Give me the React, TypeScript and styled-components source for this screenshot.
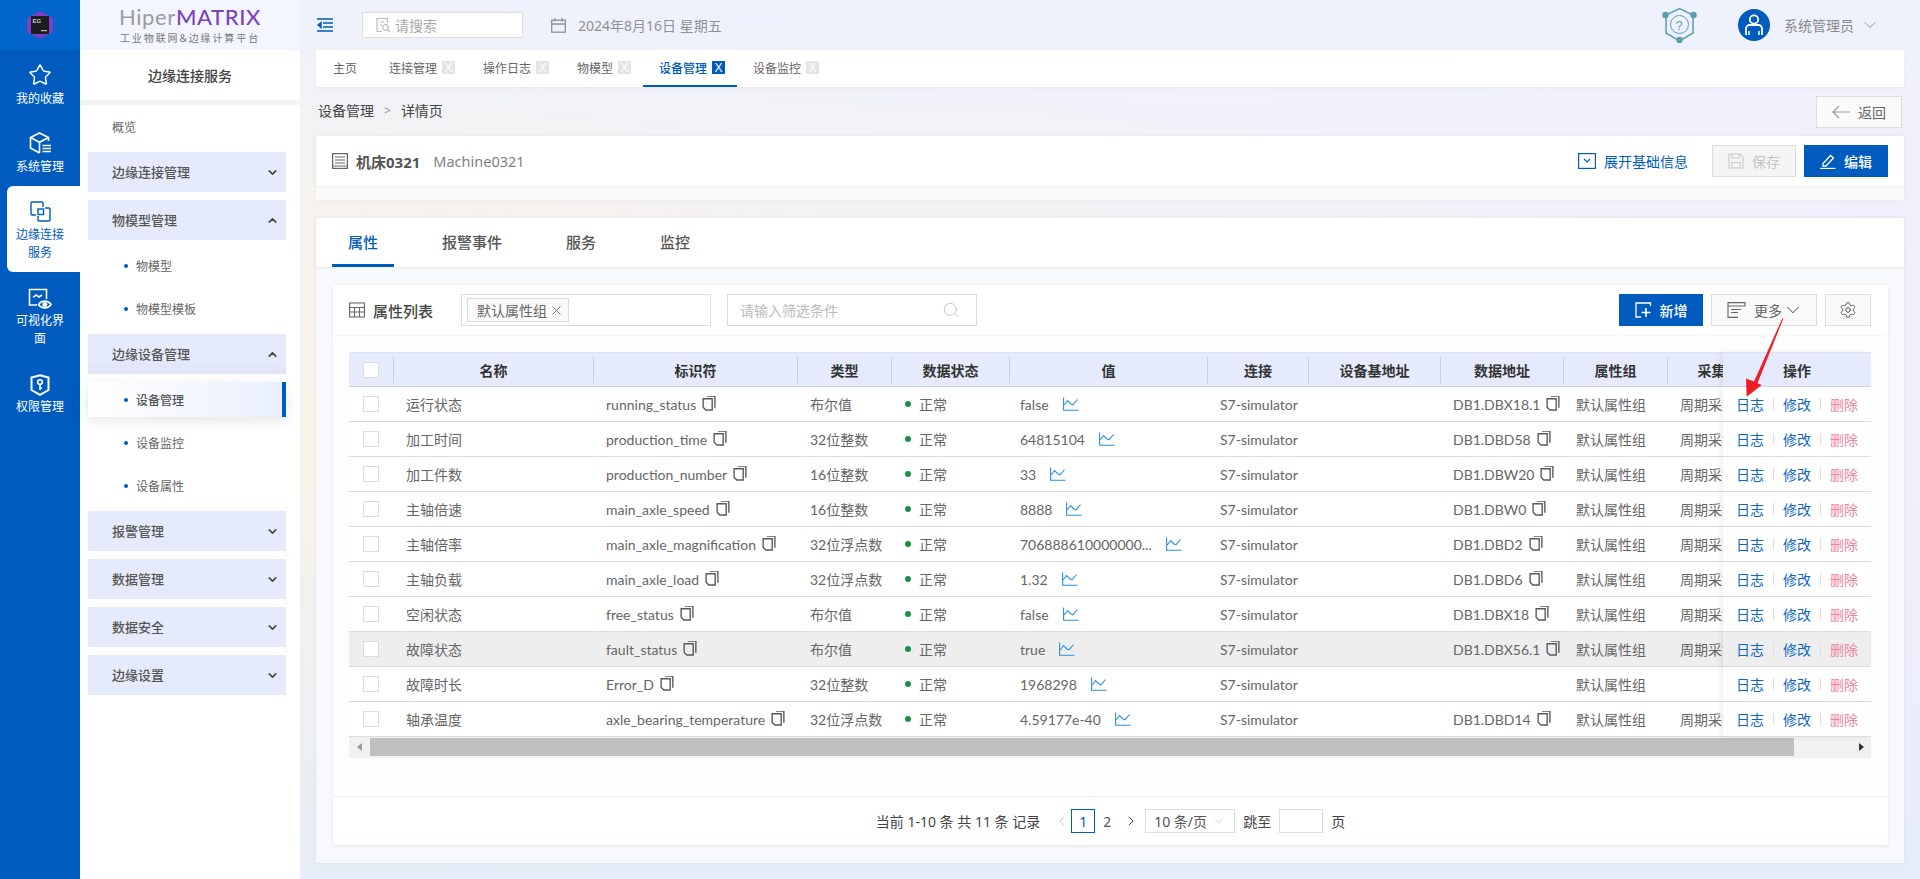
import React from 'react'
import styled, {createGlobalStyle} from 'styled-components'
import {ChevronDown, ChevronUp, ChevronLeft, ChevronRight, Search, Settings, Star} from 'lucide-react'

const blue = '#005bbf'
const font = '"Noto Sans", "Noto Sans CJK SC", sans-serif'
const tableFont = '"Lato", "Noto Sans CJK SC", sans-serif'

const GlobalStyle = createGlobalStyle`
  * { box-sizing: border-box; }
  html, body { margin: 0; padding: 0; height: 100%; overflow: hidden; }
  body { font-family: ${font}; font-size: 14px; color: #666; }
`

const Page = styled.div`
  display: flex;
  width: 1920px;
  height: 879px;
  overflow: hidden;
`

/* left rail */
const Rail = styled.nav`
  width: 80px;
  flex: none;
  background: ${blue};
  display: flex;
  flex-direction: column;
  align-items: flex-end;
`
const RailLogo = styled.div`
  width: 80px;
  height: 50px;
  background: #0065cb;
  display: flex;
  align-items: center;
  justify-content: center;
`
const RailItem = styled.div<{$active?: boolean; $h: number; $top: number; $gap: number}>`
  width: ${_ => (_.$active ? 73 : 80)}px;
  height: ${_ => _.$h}px;
  padding: ${_ => _.$top}px ${_ => (_.$active ? '16px 0 9px' : '16px 0')};
  display: flex;
  flex-direction: column;
  align-items: center;
  text-align: center;
  font-size: 12px;
  line-height: 18px;
  color: ${_ => (_.$active ? blue : '#fff')};
  background: ${_ => (_.$active ? '#fff' : 'transparent')};
  border-radius: ${_ => (_.$active ? '6px 0 0 6px' : '0')};
  svg { flex: none; margin-bottom: ${_ => _.$gap}px; }
`

/* sidebar */
const Side = styled.aside`
  width: 220px;
  flex: none;
  background: #fff;
  display: flex;
  flex-direction: column;
`
const Brand = styled.div`
  height: 50px;
  background: #f3f6fe;
  display: flex;
  flex-direction: column;
  align-items: center;
  padding-top: 3px;
`
const BrandName = styled.div`
  font-family: "Lato", sans-serif;
  font-size: 22px;
  line-height: 27px;
  letter-spacing: .6px;
  color: #9a9c9e;
  b { font-weight: 500; color: #7b44bd; }
`
const BrandSub = styled.div`
  font-size: 10px;
  line-height: 14px;
  letter-spacing: 1.9px;
  margin-top: 1px;
  color: #77797c;
`
const SideTitle = styled.div`
  height: 55px;
  border-bottom: 5px solid #f3f4f8;
  display: flex;
  align-items: center;
  justify-content: center;
  color: #444;
  font-weight: 500;
`
const SideList = styled.div`
  padding: 4px 14px 0 8px;
  display: flex;
  flex-direction: column;
  gap: 8px;
`
const Overview = styled.div`
  height: 35px;
  padding-left: 24px;
  display: flex;
  align-items: center;
  font-size: 12px;
  color: #666;
`
const GroupLabel = styled.span`
  margin-top: -2px;
`
const Group = styled.div<{$deep?: boolean}>`
  height: 40px;
  padding: 0 7px 0 24px;
  background: ${_ => (_.$deep ? 'linear-gradient(180deg, #e5ebfc 60%, #dfe5f6)' : '#e5ebfc')};
  display: flex;
  align-items: center;
  justify-content: space-between;
  font-size: 13px;
  font-weight: 500;
  color: #555;
`
const Sub = styled.div<{$active?: boolean}>`
  height: 35px;
  padding-left: 36px;
  display: flex;
  align-items: center;
  gap: 8px;
  font-size: 12px;
  color: #666;
  ${_ => _.$active && `
    font-weight: 500;
    color: #555;
    background: linear-gradient(90deg, #fff, #e9effd);
    border-right: 4px solid ${blue};
    box-shadow: 0 4px 14px rgba(0, 0, 0, .1);
  `}
  &::before {
    content: '';
    width: 4px;
    height: 4px;
    border-radius: 50%;
    background: ${blue};
  }
`

/* main column */
const Main = styled.main`
  flex: 1;
  min-width: 0;
  height: 879px;
  padding: 0 16px;
  display: flex;
  flex-direction: column;
  background:
    linear-gradient(180deg, #eef2fd 0, rgba(238, 242, 253, .2) 210px, rgba(238, 242, 253, 0) 480px, #e6edf8 879px),
    linear-gradient(90deg, #f8f3ea, #f2eefc);
`
const Top = styled.header`
  height: 50px;
  flex: none;
  display: flex;
  align-items: center;
  color: #999;
`
const SearchBox = styled.div`
  width: 161px;
  height: 26px;
  margin-left: 29px;
  padding-left: 12px;
  background: #fff;
  border: 1px solid #ddd;
  display: flex;
  align-items: center;
  gap: 4px;
  color: #aaa;
`
const DateText = styled.span`
  margin-left: 12px;
  color: #8f9194;
`
const UserName = styled.span`
  margin: 0 6px 0 14px;
  color: #8a8a8a;
`
const TabBar = styled.div`
  height: 37px;
  flex: none;
  padding-left: 1px;
  background: #fff;
  box-shadow: 0 1px 3px rgba(0, 0, 0, .05);
  display: flex;
  align-items: stretch;
  font-size: 12px;
`
const NavTab = styled.div<{$active?: boolean; $close?: boolean}>`
  padding: 0 ${_ => (_.$close ? 12 : 16)}px 0 16px;
  display: flex;
  align-items: center;
  gap: 5px;
  color: ${_ => (_.$active ? blue : '#666')};
  font-weight: ${_ => (_.$active ? 500 : 400)};
  border-bottom: 2px solid ${_ => (_.$active ? blue : 'transparent')};
`
const CloseX = styled.i<{$active?: boolean}>`
  width: 13px;
  height: 13px;
  display: flex;
  align-items: center;
  justify-content: center;
  font-style: normal;
  font-size: 12px;
  font-family: "Liberation Sans", sans-serif;
  color: #fff;
  background: ${_ => (_.$active ? blue : '#e4e4e4')};
`
const CrumbRow = styled.div`
  height: 49px;
  flex: none;
  padding-right: 2px;
  display: flex;
  align-items: center;
  justify-content: space-between;
  color: #444;
`
const Crumbs = styled.div`
  display: flex;
  align-items: center;
  margin: -3px 0 0 2px;
  gap: 10px;
  span { color: #999; font-size: 12px; }
`
const Btn = styled.button<{$kind?: 'primary' | 'disabled'; $w: number}>`
  width: ${_ => _.$w}px;
  height: 32px;
  padding: 0;
  display: flex;
  align-items: center;
  justify-content: center;
  gap: 8px;
  font: 14px ${font};
  border: 1px solid ${_ => (_.$kind === 'primary' ? blue : '#ddd')};
  background: ${_ => (_.$kind === 'primary' ? blue : _.$kind === 'disabled' ? '#f5f5f5' : '#fafafa')};
  color: ${_ => (_.$kind === 'primary' ? '#fff' : _.$kind === 'disabled' ? '#c4c4c4' : '#666')};
  font-weight: ${_ => (_.$kind === 'primary' ? 500 : 400)};
`
const EditBtn = styled(Btn)`
  margin-left: 8px;
`
const InfoCard = styled.section`
  height: 64px;
  flex: none;
  background: #fafafa;
  box-shadow: 0 0 4px rgba(0, 0, 0, .04);
`
const InfoHead = styled.div`
  height: 50px;
  padding: 0 16px;
  background: #fff;
  box-shadow: 0 1px 3px rgba(0, 0, 0, .05);
  display: flex;
  align-items: center;
  color: #444;
`
const InfoName = styled.b`
  margin-left: 8px;
  font-size: 15px;
  font-weight: 700;
  color: #555;
`
const InfoCode = styled.span`
  margin-left: 13px;
  font-size: 14.5px;
  color: #808080;
`
const Expand = styled.div`
  margin-left: auto;
  margin-right: 24px;
  display: flex;
  align-items: center;
  gap: 8px;
  color: ${blue};
`
const ProtoCard = styled.section`
  height: 645px;
  margin-top: 18px;
  flex: none;
  background: #f8f9fc;
  box-shadow: 0 0 4px rgba(0, 0, 0, .05);
`
const PropTabs = styled.div`
  height: 49px;
  padding-left: 16px;
  background: #fff;
  box-shadow: 0 1px 3px rgba(0, 0, 0, .06);
  display: flex;
  gap: 32px;
`
const PropTab = styled.div<{$active?: boolean}>`
  padding: 0 16px;
  display: flex;
  align-items: center;
  font-size: 15px;
  font-weight: 500;
  color: ${_ => (_.$active ? blue : '#555')};
  border-bottom: 3px solid ${_ => (_.$active ? blue : 'transparent')};
`
const ListCard = styled.div`
  height: 561px;
  margin: 18px 16px 0 17px;
  background: #fdfdfd;
  box-shadow: 0 0 3px rgba(0, 0, 0, .08);
  display: flex;
  flex-direction: column;
`
const ListBar = styled.div`
  height: 50px;
  flex: none;
  padding: 0 17px 0 16px;
  background: #fff;
  box-shadow: 0 1px 3px rgba(0, 0, 0, .04);
  display: flex;
  align-items: center;
`
const ListTitle = styled.span`
  margin-left: 8px;
  font-size: 15px;
  font-weight: 500;
  color: #444;
`
const GroupSelect = styled.div`
  width: 250px;
  height: 32px;
  margin-left: 28px;
  padding-left: 5px;
  border: 1px solid #ddd;
  background: #fff;
  display: flex;
  align-items: center;
`
const Tag = styled.span`
  width: 102px;
  height: 24px;
  padding-left: 9px;
  border: 1px solid #ddd;
  background: #fafafa;
  display: flex;
  align-items: center;
  gap: 5px;
  color: #666;
`
const FilterBox = styled.div`
  width: 250px;
  height: 32px;
  margin-left: 16px;
  padding: 0 16px 0 12px;
  border: 1px solid #ddd;
  background: #fff;
  display: flex;
  align-items: center;
  justify-content: space-between;
  color: #bbb;
`
const BarButtons = styled.div`
  margin-left: auto;
  display: flex;
  gap: 8px;
`
const TableArea = styled.div`
  margin: 17px 17px 0 16px;
  position: relative;
  font-family: ${tableFont};
`
const TableBody = styled.div`
  display: flex;
  background: #fff;
`
const ScrollPane = styled.div`
  flex: 1;
  min-width: 0;
  overflow: hidden;
`
const FixedPane = styled.div`
  width: 148px;
  flex: none;
  box-shadow: -3px 0 5px rgba(0, 0, 0, .06);
  position: relative;
`
const cols = '44px 200px 204px 94px 118px 198px 101px 132px 123px 104px 116px'
const HeadRow = styled.div<{$cols?: boolean}>`
  height: 35px;
  width: ${_ => (_.$cols ? '1434px' : 'auto')};
  background: #e5ebfc;
  border-top: 1px solid #dde2ee;
  border-bottom: 1px solid #cfd3dc;
  display: ${_ => (_.$cols ? 'grid' : 'flex')};
  grid-template-columns: ${cols};
  align-items: center;
  justify-content: ${_ => (_.$cols ? 'start' : 'center')};
  font-weight: 700;
  color: #333;
`
const HeadCell = styled.div`
  height: 26px;
  display: flex;
  align-items: center;
  justify-content: center;
  border-left: 1px solid #c9cdd5;
  white-space: nowrap;
`
const Row = styled.div<{$hl?: boolean; $cols?: boolean}>`
  height: 35px;
  width: ${_ => (_.$cols ? '1434px' : 'auto')};
  background: ${_ => (_.$hl ? '#eeeeee' : '#fff')};
  border-bottom: 1px solid #dcdcdc;
  display: ${_ => (_.$cols ? 'grid' : 'flex')};
  grid-template-columns: ${cols};
  align-items: center;
  justify-content: ${_ => (_.$cols ? 'start' : 'flex-start')};
  padding-left: ${_ => (_.$cols ? 0 : 13)}px;
  color: #666;
`
const Cell = styled.div<{$pad?: number}>`
  padding-left: ${_ => _.$pad ?? 13}px;
  display: flex;
  align-items: center;
  white-space: nowrap;
  overflow: hidden;
  svg { flex: none; }
`
const CheckCell = styled.div`
  display: flex;
  padding-left: 14px;
`
const Check = styled.span`
  width: 16px;
  height: 16px;
  background: #fff;
  border: 1px solid #ddd;
`
const Dot = styled.i`
  width: 6px;
  height: 6px;
  margin-right: 8px;
  border-radius: 50%;
  background: #1d8f4a;
`
const Op = styled.a<{$danger?: boolean}>`
  color: ${_ => (_.$danger ? '#f0849a' : '#0f66c6')};
`
const OpSep = styled.i`
  width: 1px;
  height: 12px;
  margin: 0 9px;
  background: #ddd;
`
const ScrollTrack = styled.div`
  height: 21px;
  padding-top: 1px;
  background: #f1f1f1;
  display: flex;
  align-items: flex-start;
  justify-content: space-between;
  color: #555;
`
const ScrollArrow = styled.div<{$right?: boolean}>`
  width: 21px;
  height: 18px;
  display: flex;
  align-items: center;
  justify-content: center;
  &::before {
    content: '';
    border: 4px solid transparent;
    ${_ => (_.$right ? 'border-left: 5px solid #333; margin-left: 5px;' : 'border-right: 5px solid #999; margin-right: 5px;')}
  }
`
const ScrollThumb = styled.div`
  width: 1424px;
  height: 18px;
  margin-right: auto;
  background: #c0c0c0;
`
const Pager = styled.div`
  margin-top: auto;
  height: 50px;
  flex: none;
  background: #fff;
  border-top: 1px solid #f0f1f4;
  border-bottom: 1px solid #eceef2;
  display: flex;
  align-items: center;
  justify-content: center;
  color: #444;
`
const PageNum = styled.span<{$active?: boolean}>`
  width: 24px;
  height: 24px;
  display: flex;
  align-items: center;
  justify-content: center;
  border: 1px solid ${_ => (_.$active ? blue : 'transparent')};
  color: ${_ => (_.$active ? blue : '#555')};
`
const PageSize = styled.div`
  width: 90px;
  height: 24px;
  margin-right: 8px;
  padding: 0 8px;
  border: 1px solid #ddd;
  display: flex;
  align-items: center;
  justify-content: space-between;
  color: #555;
`
const PageInput = styled.div`
  width: 44px;
  height: 24px;
  margin: 0 8px;
  border: 1px solid #ddd;
`
const ArrowMark = styled.svg`
  position: absolute;
  left: 1391px;
  top: -37px;
`
const CopySvg = styled.svg`
  margin: -3px 0 0 6px;
`
const TrendSvg = styled.svg`
  margin-left: 14px;
`

const CopyIcon = () => (
  <CopySvg width="14" height="16" viewBox="0 0 13 15" fill="none" stroke="#5a5a5a" strokeWidth="1.300">
    <path d="M4.500 1h7.500v11" />
    <path d="M1 3.500h8.500V14H3.500L1 11.500z" />
  </CopySvg>
)
const TrendIcon = () => (
  <TrendSvg width="16" height="14" viewBox="0 0 16 14" fill="none" stroke="#2b8fd6" strokeWidth="1.100">
    <path d="M.6 .5v12.800H15.500" />
    <path d="M1.200 8L4.500 3.500 8 7l2 .8L14.500 2.500" />
  </TrendSvg>
)
const Chevron = ({up}: {up?: boolean}) =>
  up ? <ChevronUp size={13} strokeWidth={3} color="#444" /> : <ChevronDown size={13} strokeWidth={3} color="#444" />

const tabs = [
  {t: '主页'},
  {t: '连接管理', x: 1},
  {t: '操作日志', x: 1},
  {t: '物模型', x: 1},
  {t: '设备管理', x: 1, active: 1},
  {t: '设备监控', x: 1},
]
const groups = ['报警管理', '数据管理', '数据安全', '边缘设置']
const head = ['名称', '标识符', '类型', '数据状态', '值', '连接', '设备基地址', '数据地址', '属性组', '采集方式']
const rows = [
  ['运行状态', 'running_status', '布尔值', 'false', 'DB1.DBX18.1', 1],
  ['加工时间', 'production_time', '32位整数', '64815104', 'DB1.DBD58', 1],
  ['加工件数', 'production_number', '16位整数', '33', 'DB1.DBW20', 1],
  ['主轴倍速', 'main_axle_speed', '16位整数', '8888', 'DB1.DBW0', 1],
  ['主轴倍率', 'main_axle_magnification', '32位浮点数', '706888610000000...', 'DB1.DBD2', 1],
  ['主轴负载', 'main_axle_load', '32位浮点数', '1.32', 'DB1.DBD6', 1],
  ['空闲状态', 'free_status', '布尔值', 'false', 'DB1.DBX18', 1],
  ['故障状态', 'fault_status', '布尔值', 'true', 'DB1.DBX56.1', 1],
  ['故障时长', 'Error_D', '32位整数', '1968298', '', 0],
  ['轴承温度', 'axle_bearing_temperature', '32位浮点数', '4.59177e-40', 'DB1.DBD14', 1],
] as const

export default function App() {
  return (
    <Page>
      <GlobalStyle />
      <Rail>
        <RailLogo>
          <svg width="26" height="28" viewBox="0 0 26 28">
            <path d="M13 0l13 7v14l-13 7L0 21V7z" fill="#7d3fc4" />
            <rect x="4" y="5" width="18" height="18" fill="#1c1c22" />
            <text x="5.500" y="12" fontSize="6" fontWeight="700" fill="#ccc" fontFamily="Liberation Sans">EG</text>
            <rect x="14" y="19" width="6" height="1.200" fill="#bbb" />
          </svg>
        </RailLogo>
        <RailItem $h={68} $top={13} $gap={3}>
          <Star size={24} strokeWidth={1.500} />
          我的收藏
        </RailItem>
        <RailItem $h={68} $top={13} $gap={3}>
          <svg width="24" height="24" viewBox="0 0 24 24" fill="none" stroke="#fff" strokeWidth="1.600">
            <path d="M20.500 10V6.500L11.500 2 2.500 6.500v10.500l9 5" />
            <path d="M2.500 6.500l9 4.800 9-4.800M11.500 11.300V22" />
            <path d="M14.500 14.500h8.500M14.500 17.500h8.500M14.500 20.500h8.500" />
          </svg>
          系统管理
        </RailItem>
        <RailItem $h={86} $top={15} $gap={4} $active>
          <svg width="21" height="21" viewBox="0 0 21 21" fill="none" stroke={blue} strokeWidth="1.400">
            <path d="M6 14H2a1 1 0 0 1-1-1V2a1 1 0 0 1 1-1h10a1 1 0 0 1 1 1v4" />
            <path d="M15 7h4a1 1 0 0 1 1 1v11a1 1 0 0 1-1 1H9a1 1 0 0 1-1-1v-4" />
            <rect x="8" y="8" width="5.500" height="5.500" />
          </svg>
          边缘连接服务
        </RailItem>
        <RailItem $h={88} $top={16} $gap={2}>
          <svg width="24" height="22" viewBox="0 0 24 22" fill="none" stroke="#fff" strokeWidth="1.600">
            <path d="M9 17H1.500V1.500h17V11" />
            <path d="M5 9.500l3-2.500 3 2 3-2" />
            <path d="M10.500 16.500c3-4.500 9.500-4.500 12.500 0-3 4.500-9.500 4.500-12.500 0z" />
            <circle cx="16.800" cy="16.500" r="1.700" fill="#fff" />
          </svg>
          可视化界面
        </RailItem>
        <RailItem $h={68} $top={14} $gap={2}>
          <svg width="20" height="22" viewBox="0 0 20 22" fill="none" stroke="#fff" strokeWidth="2">
            <path d="M10 1.200l8.500 2.300v12.500L10 20.800 1.500 16V3.500z" />
            <circle cx="10" cy="8" r="2.300" strokeWidth="1.600" />
            <path d="M10 10.500v5.500M10 14h2" strokeWidth="1.600" />
          </svg>
          权限管理
        </RailItem>
      </Rail>

      <Side>
        <Brand>
          <BrandName>Hiper<b>MATRIX</b></BrandName>
          <BrandSub>工业物联网&amp;边缘计算平台</BrandSub>
        </Brand>
        <SideTitle>边缘连接服务</SideTitle>
        <SideList>
          <Overview>概览</Overview>
          <Group><GroupLabel>边缘连接管理</GroupLabel><Chevron /></Group>
          <Group><GroupLabel>物模型管理</GroupLabel><Chevron up /></Group>
          <Sub>物模型</Sub>
          <Sub>物模型模板</Sub>
          <Group $deep><GroupLabel>边缘设备管理</GroupLabel><Chevron up /></Group>
          <Sub $active>设备管理</Sub>
          <Sub>设备监控</Sub>
          <Sub>设备属性</Sub>
          {groups.map(g => <Group key={g}><GroupLabel>{g}</GroupLabel><Chevron /></Group>)}
        </SideList>
      </Side>

      <Main>
        <Top>
          <svg width="16" height="14" viewBox="0 0 16 14" fill="none" stroke={blue} strokeWidth="1.400" style={{marginLeft: 1}}>
            <path d="M0 1h16M6 5h10M6 9h10M0 13h16" />
            <path d="M4 4.500L1 7l3 2.500z" fill={blue} />
          </svg>
          <SearchBox>
            <svg width="16" height="16" viewBox="0 0 16 16" fill="none" stroke="#bbb" strokeWidth="1.200">
              <path d="M7 14.500H2V1.500h10.500V6" />
              <path d="M4.500 5h5M4.500 8H7" />
              <circle cx="10.500" cy="10.500" r="2.800" />
              <path d="M12.500 12.500l2.500 2.500" />
            </svg>
            请搜索
          </SearchBox>
          <svg width="15" height="15" viewBox="0 0 15 15" fill="none" stroke="#8f9194" strokeWidth="1.300" style={{marginLeft: 28}}>
            <rect x=".7" y="2.200" width="13.600" height="12" />
            <path d="M.7 6h13.600M4 0v3.500M11 0v3.500" />
          </svg>
          <DateText>2024年8月16日 星期五</DateText>
          <svg width="35" height="36" viewBox="0 0 35 36" fill="none" stroke="#5b9fb0" strokeWidth="1.500" style={{marginLeft: 'auto'}}>
            <path d="M4 8L17.500 1.500 31 8v18l-13.500 8L4 26z" />
            <circle cx="17.500" cy="17.500" r="9" strokeWidth="1" />
            <circle cx="3.500" cy="8" r="2.500" fill="#5b9fb0" />
            <circle cx="31.500" cy="8" r="2.500" fill="#5b9fb0" />
            <circle cx="17.500" cy="33" r="2.500" fill="#5b9fb0" />
            <text x="13.500" y="22.500" fontSize="13" fill="#5b9fb0" stroke="none" fontFamily="Liberation Sans">?</text>
          </svg>
          <svg width="32" height="32" viewBox="0 0 32 32" style={{marginLeft: 41}}>
            <circle cx="16" cy="16" r="16" fill={blue} />
            <circle cx="16" cy="10.500" r="4.200" fill="none" stroke="#fff" strokeWidth="1.800" />
            <path d="M8 26v-6.500a3.500 3.500 0 0 1 3.500-3.500h9a3.500 3.500 0 0 1 3.500 3.500V26" fill="none" stroke="#fff" strokeWidth="1.800" />
            <path d="M11 26v-4M21 26v-4" stroke="#fff" strokeWidth="1.500" />
          </svg>
          <UserName>系统管理员</UserName>
          <ChevronDown size={20} strokeWidth={1.100} color="#8a8a8a" style={{marginRight: 24}} />
        </Top>

        <TabBar>
          {tabs.map(tab => (
            <NavTab key={tab.t} $active={!!tab.active} $close={!!tab.x}>
              {tab.t}
              {tab.x && <CloseX $active={!!tab.active}>X</CloseX>}
            </NavTab>
          ))}
        </TabBar>

        <CrumbRow>
          <Crumbs>设备管理<span>&gt;</span>详情页</Crumbs>
          <Btn $w={86}>
            <svg width="18" height="14" viewBox="0 0 18 14" fill="none" stroke="#999" strokeWidth="1.200">
              <path d="M18 7H1M7 1L1 7l6 6" />
            </svg>
            返回
          </Btn>
        </CrumbRow>

        <InfoCard>
          <InfoHead>
            <svg width="16" height="16" viewBox="0 0 16 16" fill="none" stroke="#666" strokeWidth="1.200">
              <rect x=".6" y=".6" width="14.800" height="14.800" />
              <path d="M3 4h10M3 7h10M3 10h10M.6 13h14.800" />
            </svg>
            <InfoName>机床0321</InfoName>
            <InfoCode>Machine0321</InfoCode>
            <Expand>
              <svg width="18" height="16" viewBox="0 0 18 16" fill="none" stroke={blue} strokeWidth="1.200">
                <rect x=".6" y=".6" width="16.800" height="14.800" />
                <path d="M6 6l3 3 3-3" />
              </svg>
              展开基础信息
            </Expand>
            <Btn $w={84} $kind="disabled">
              <svg width="16" height="16" viewBox="0 0 16 16" fill="none" stroke="#ccc" strokeWidth="1.200">
                <path d="M1 1h11l3 3v11H1z" />
                <path d="M4 1v4h7V1M4 15V9.500h8V15" />
              </svg>
              保存
            </Btn>
            <EditBtn $w={84} $kind="primary">
              <svg width="16" height="16" viewBox="0 0 16 16" fill="none" stroke="#fff" strokeWidth="1.300">
                <path d="M3 10.500L10.500 2.500l3 2.500L6 13H3z" />
                <path d="M0 15.500h15.500" />
              </svg>
              编辑
            </EditBtn>
          </InfoHead>
        </InfoCard>

        <ProtoCard>
          <PropTabs>
            <PropTab $active>属性</PropTab>
            <PropTab>报警事件</PropTab>
            <PropTab>服务</PropTab>
            <PropTab>监控</PropTab>
          </PropTabs>
          <ListCard>
            <ListBar>
              <svg width="16" height="16" viewBox="0 0 16 16" fill="none" stroke="#666" strokeWidth="1.100">
                <rect x=".6" y="1" width="14.800" height="14" />
                <path d="M.6 5.500h14.800M.6 10h14.800M5.500 5.500V15M10.500 5.500V15" />
              </svg>
              <ListTitle>属性列表</ListTitle>
              <GroupSelect>
                <Tag>默认属性组<svg width="9" height="9" viewBox="0 0 9 9" stroke="#777" strokeWidth="1"><path d="M.5.500l8 8M8.500.500l-8 8" /></svg></Tag>
              </GroupSelect>
              <FilterBox>
                请输入筛选条件
                <Search size={18} strokeWidth={1.100} color="#bbb" />
              </FilterBox>
              <BarButtons>
                <Btn $w={84} $kind="primary">
                  <svg width="17" height="16" viewBox="0 0 17 16" fill="none" stroke="#fff" strokeWidth="1.300">
                    <path d="M15.500 4V1H1v14h5" />
                    <path d="M11 6v9M6.500 10.500h9" strokeWidth="1.600" />
                  </svg>
                  新增
                </Btn>
                <Btn $w={106}>
                  <svg width="19" height="16" viewBox="0 0 19 16" fill="none" stroke="#666" strokeWidth="1.100">
                    <path d="M1 .6h17v3.400H1zM1 4v11.400h10M4 7.500h10M4 10.500h7" />
                  </svg>
                  更多
                  <ChevronDown size={22} strokeWidth={1.100} color="#666" style={{margin: '0 -3px 0 -8px'}} />
                </Btn>
                <Btn $w={46}>
                  <Settings size={18} strokeWidth={1.300} color="#555" />
                </Btn>
              </BarButtons>
            </ListBar>

            <TableArea>
              <TableBody>
                <ScrollPane>
                  <HeadRow $cols>
                    <CheckCell><Check /></CheckCell>
                    {head.map(h => <HeadCell key={h}>{h}</HeadCell>)}
                  </HeadRow>
                  {rows.map((r, i) => (
                    <Row key={r[1]} $cols $hl={i === 7}>
                      <CheckCell><Check /></CheckCell>
                      <Cell>{r[0]}</Cell>
                      <Cell>{r[1]}<CopyIcon /></Cell>
                      <Cell>{r[2]}</Cell>
                      <Cell $pad={14}><Dot />正常</Cell>
                      <Cell $pad={11}>{r[3]}<TrendIcon /></Cell>
                      <Cell>S7-simulator</Cell>
                      <Cell />
                      <Cell>{r[4]}{r[4] && <CopyIcon />}</Cell>
                      <Cell>默认属性组</Cell>
                      <Cell>{r[5] ? '周期采集' : ''}</Cell>
                    </Row>
                  ))}
                </ScrollPane>
                <FixedPane>
                  <HeadRow>操作</HeadRow>
                  {rows.map((r, i) => (
                    <Row key={r[1]} $hl={i === 7}>
                      <Op>日志</Op><OpSep /><Op>修改</Op><OpSep /><Op $danger>删除</Op>
                    </Row>
                  ))}
                </FixedPane>
              </TableBody>
              <ScrollTrack>
                <ScrollArrow />
                <ScrollThumb />
                <ScrollArrow $right />
              </ScrollTrack>
              <ArrowMark width="46" height="85" viewBox="0 0 46 85">
                <path d="M42.300 3.300L14 66.500 6 63.500 6.700 81.700 21.700 70 17.500 68.300 43.300 3.700z" fill="#ee1c25" />
              </ArrowMark>
            </TableArea>

            <Pager>
              当前 1-10 条 共 11 条 记录
              <ChevronLeft size={16} strokeWidth={1.200} color="#bbb" style={{margin: '0 1px 0 14px'}} />
              <PageNum $active>1</PageNum>
              <PageNum>2</PageNum>
              <ChevronRight size={16} strokeWidth={1.400} color="#444" style={{margin: '0 6px 0 4px'}} />
              <PageSize>10 条/页<ChevronDown size={14} strokeWidth={1.100} color="#bbb" /></PageSize>
              跳至
              <PageInput />
              页
            </Pager>
          </ListCard>
        </ProtoCard>
      </Main>
    </Page>
  )
}
